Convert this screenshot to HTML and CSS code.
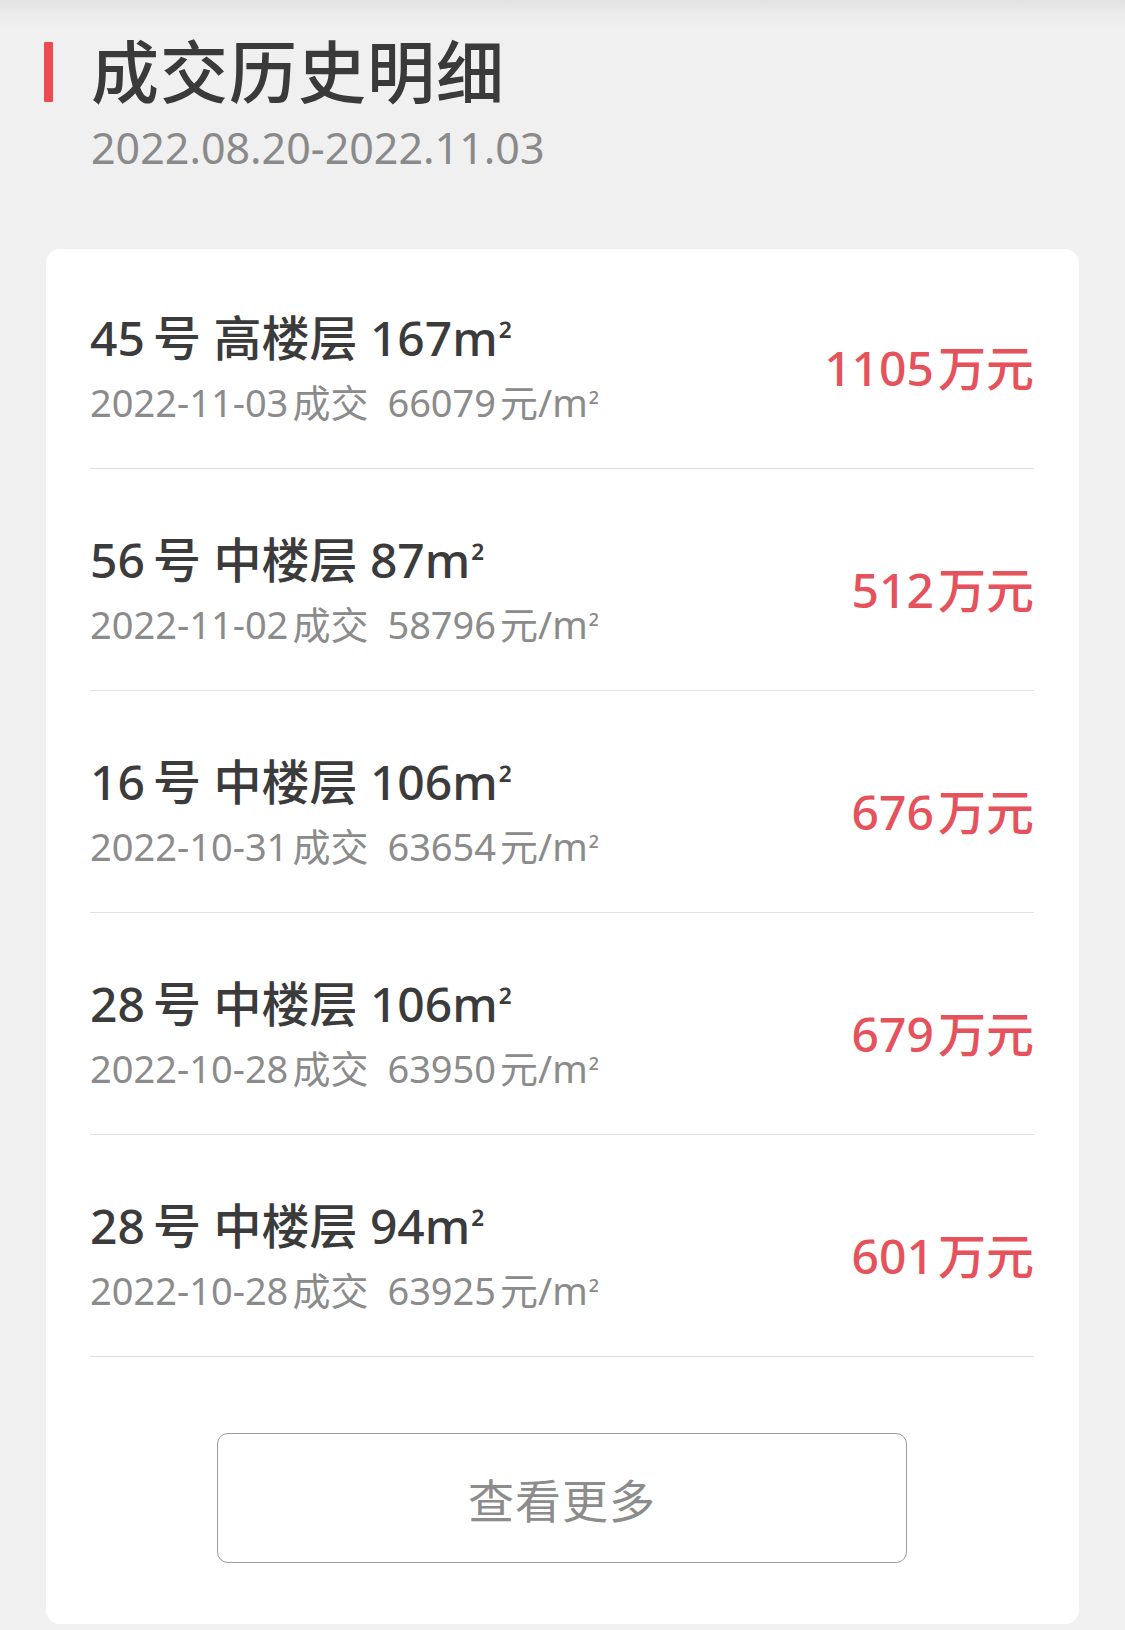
FILE: index.html
```html
<!DOCTYPE html>
<html lang="zh-CN">
<head>
<meta charset="utf-8">
<title>成交历史明细</title>
<link rel="stylesheet" href="styles.css">
</head>
<body>
<div class="page">
  <header class="header">
    <div class="bar"></div>
    <div class="head-text">
      <h1 class="title">成交历史明细</h1>
      <div class="range">2022.08.20-2022.11.03</div>
    </div>
  </header>

  <section class="card">
    <div class="row">
      <div class="info">
        <div class="name"><span class="num">45</span>号 高楼层 167m<span class="sq">²</span></div>
        <div class="meta"><span>2022-11-03</span><span class="cj">成交</span><span class="up">66079</span><span class="unit">元/m<span class="sq">²</span></span></div>
      </div>
      <div class="price">1105<span class="wan">万元</span></div>
    </div>
    <div class="row">
      <div class="info">
        <div class="name"><span class="num">56</span>号 中楼层 87m<span class="sq">²</span></div>
        <div class="meta"><span>2022-11-02</span><span class="cj">成交</span><span class="up">58796</span><span class="unit">元/m<span class="sq">²</span></span></div>
      </div>
      <div class="price">512<span class="wan">万元</span></div>
    </div>
    <div class="row">
      <div class="info">
        <div class="name"><span class="num">16</span>号 中楼层 106m<span class="sq">²</span></div>
        <div class="meta"><span>2022-10-31</span><span class="cj">成交</span><span class="up">63654</span><span class="unit">元/m<span class="sq">²</span></span></div>
      </div>
      <div class="price">676<span class="wan">万元</span></div>
    </div>
    <div class="row">
      <div class="info">
        <div class="name"><span class="num">28</span>号 中楼层 106m<span class="sq">²</span></div>
        <div class="meta"><span>2022-10-28</span><span class="cj">成交</span><span class="up">63950</span><span class="unit">元/m<span class="sq">²</span></span></div>
      </div>
      <div class="price">679<span class="wan">万元</span></div>
    </div>
    <div class="row">
      <div class="info">
        <div class="name"><span class="num">28</span>号 中楼层 94m<span class="sq">²</span></div>
        <div class="meta"><span>2022-10-28</span><span class="cj">成交</span><span class="up">63925</span><span class="unit">元/m<span class="sq">²</span></span></div>
      </div>
      <div class="price">601<span class="wan">万元</span></div>
    </div>
    <div class="more-wrap">
      <button class="more">查看更多</button>
    </div>
  </section>
</div>
</body>
</html>
```
FILE: styles.css
```css
* { box-sizing: border-box; }
html, body {
  margin: 0;
  padding: 0;
}
body {
  background: linear-gradient(#e2e2e2 0px, #ececec 14px, #f0f0f0 30px, #f0f0f0 100%);
  font-family: "Noto Sans", "Noto Sans CJK SC", sans-serif;
  width: 1125px;
  height: 1630px;
  overflow: hidden;
}
.page {
  padding-top: 29px;
}
.header {
  display: flex;
  padding-left: 44px;
}
.bar {
  width: 9px;
  height: 60px;
  margin-top: 13px;
  background: #ee4a52;
  border-radius: 1px;
  flex: none;
}
.head-text {
  margin-left: 38px;
}
.title {
  margin: 0;
  font-family: "Noto Sans CJK SC", sans-serif;
  font-size: 68px;
  line-height: 80px;
  font-weight: 500;
  color: #3a3a3a;
  letter-spacing: 1px;
}
.range {
  margin-top: 14px;
  font-size: 43px;
  line-height: 50px;
  color: #8a8a8a;
}
.card {
  margin: 76px 46px 0 46px;
  background: #fff;
  border-radius: 14px;
  padding: 0 45px 61px 44px;
}
.row {
  display: flex;
  justify-content: space-between;
  align-items: center;
  padding: 61px 0 43px 0;
  border-bottom: 1px solid #e2e2e2;
}
.row:first-child {
  padding-top: 59px;
}
.name {
  font-size: 48px;
  line-height: 60px;
  font-weight: 500;
  color: #3b3b3b;
}
.num {
  margin-right: 8px;
}
.sq {
  font-size: 0.78em;
  line-height: 0;
  vertical-align: 0.05em;
  margin-left: 1px;
}
.meta {
  margin-top: 11px;
  font-size: 38px;
  line-height: 46px;
  color: #8b8b8b;
}
.cj { margin-left: 4px; }
.up { margin-left: 19px; }
.unit { margin-left: 4px; }
.price {
  font-size: 48px;
  line-height: 60px;
  font-weight: 500;
  color: #e5525b;
  margin-top: 2px;
}
.wan { margin-left: 4px; }
.more-wrap {
  display: flex;
  justify-content: center;
  padding-top: 76px;
}
.more {
  width: 690px;
  height: 130px;
  border: 1.5px solid #9c9c9c;
  border-radius: 11px;
  background: #fff;
  font-family: "Noto Sans CJK SC", sans-serif;
  font-size: 46px;
  color: #8c8c8c;
  letter-spacing: 1px;
  padding: 0;
}
```
